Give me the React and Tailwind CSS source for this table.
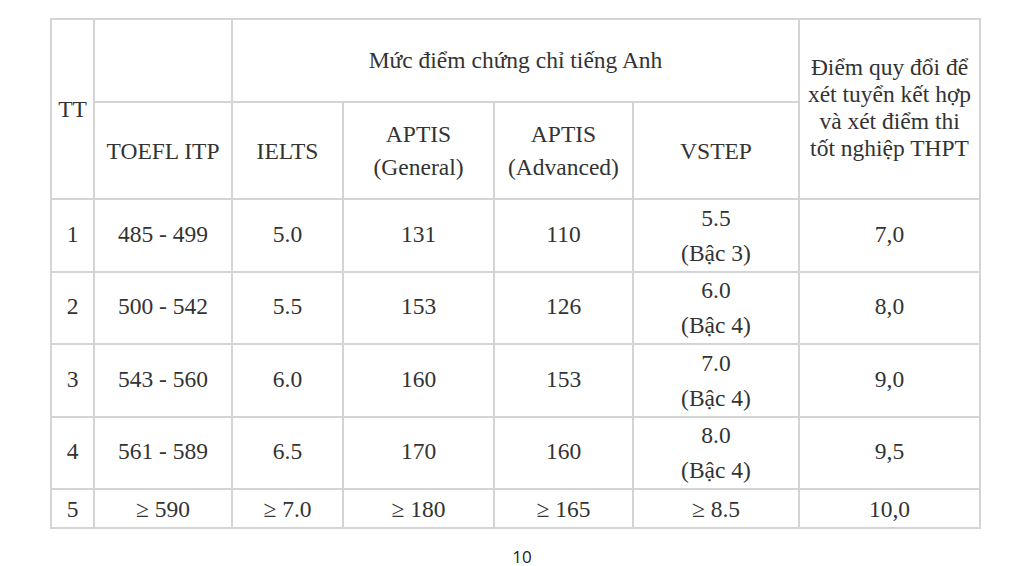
const rows = [
  { tt: '1', toefl: '485 - 499', ielts: '5.0', gen: '131', adv: '110', vstep: ['5.5', '(Bậc 3)'], score: '7,0', h: 'h-[73px]' },
  { tt: '2', toefl: '500 - 542', ielts: '5.5', gen: '153', adv: '126', vstep: ['6.0', '(Bậc 4)'], score: '8,0', h: 'h-[72px]' },
  { tt: '3', toefl: '543 - 560', ielts: '6.0', gen: '160', adv: '153', vstep: ['7.0', '(Bậc 4)'], score: '9,0', h: 'h-[73px]' },
  { tt: '4', toefl: '561 - 589', ielts: '6.5', gen: '170', adv: '160', vstep: ['8.0', '(Bậc 4)'], score: '9,5', h: 'h-[72px]' },
];

const cell = "border-2 border-[#d4d4d4] p-0 text-center align-middle font-normal font-['Liberation_Serif']";

export default function App() {
  return (
    <div className="w-[1020px] h-[566px] bg-white text-[#333] font-serif flex flex-col">
      <div className="pl-[50px] pt-[18px]">
        <table className="table-fixed border-collapse w-[929px] text-[23.5px] leading-[34px] font-['Liberation_Serif']">
          <colgroup>
            <col className="w-[43px]" />
            <col className="w-[138px]" />
            <col className="w-[111px]" />
            <col className="w-[151px]" />
            <col className="w-[139px]" />
            <col className="w-[166px]" />
            <col className="w-[181px]" />
          </colgroup>
          <thead>
            <tr className="h-[83px]">
              <th rowSpan={2} className={cell}>TT</th>
              <th className={cell}></th>
              <th colSpan={4} className={`${cell} pb-[2px]`}>Mức điểm chứng chỉ tiếng Anh</th>
              <th rowSpan={2} className={`${cell} leading-[27px] pb-[2px]`}>
                Điểm quy đổi để<br />xét tuyển kết hợp<br />và xét điểm thi<br />tốt nghiệp THPT
              </th>
            </tr>
            <tr className="h-[97px]">
              <th className={cell}>TOEFL ITP</th>
              <th className={cell}>IELTS</th>
              <th className={`${cell} leading-[33px]`}>APTIS<br />(General)</th>
              <th className={`${cell} leading-[33px]`}>APTIS<br />(Advanced)</th>
              <th className={cell}>VSTEP</th>
            </tr>
          </thead>
          <tbody>
            {rows.map((r) => (
              <tr key={r.tt} className={r.h}>
                <td className={`${cell} pb-[4px]`}>{r.tt}</td>
                <td className={`${cell} pb-[4px]`}>{r.toefl}</td>
                <td className={`${cell} pb-[4px]`}>{r.ielts}</td>
                <td className={`${cell} pb-[4px]`}>{r.gen}</td>
                <td className={`${cell} pb-[4px]`}>{r.adv}</td>
                <td className={`${cell} leading-[35px]`}>{r.vstep[0]}<br />{r.vstep[1]}</td>
                <td className={`${cell} pb-[4px]`}>{r.score}</td>
              </tr>
            ))}
            <tr className="h-[39px]">
              <td className={cell}>5</td>
              <td className={cell}>≥ 590</td>
              <td className={cell}>≥ 7.0</td>
              <td className={cell}>≥ 180</td>
              <td className={cell}>≥ 165</td>
              <td className={cell}>≥ 8.5</td>
              <td className={cell}>10,0</td>
            </tr>
          </tbody>
        </table>
      </div>
      <div className="mt-[16px] w-full flex justify-center pl-[24px]">
        <span className="font-['Open_Sans'] font-medium text-[17px] leading-[23px] text-[#222]">10</span>
      </div>
    </div>
  );
}
